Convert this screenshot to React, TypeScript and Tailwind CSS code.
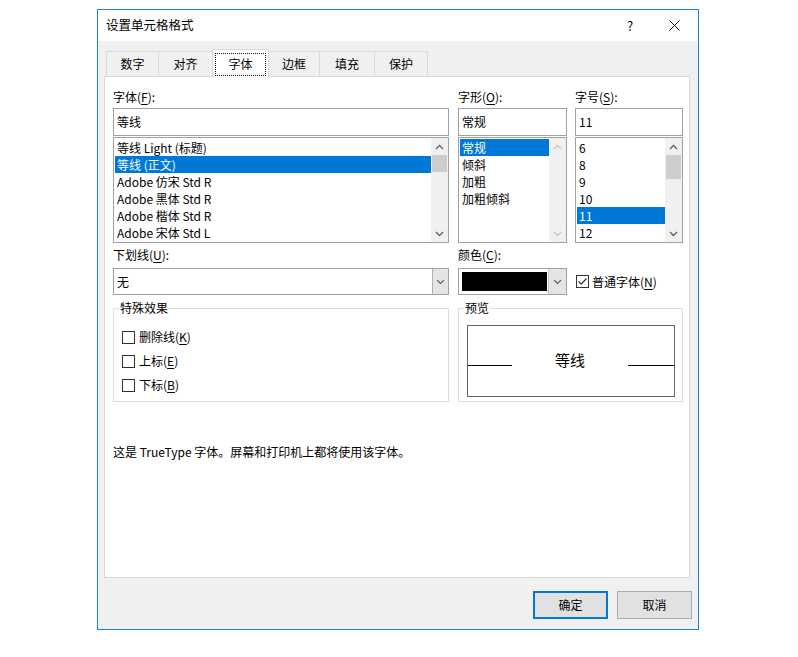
import React from "react";

function Chevron({ dir, color }: { dir: "up" | "down"; color: string }) {
  return (
    <svg width="9" height="6" viewBox="0 0 9 6">
      <path
        d={dir === "up" ? "M1 5 L4.5 1.5 L8 5" : "M1 1 L4.5 4.5 L8 1"}
        stroke={color}
        strokeWidth="1.3"
        fill="none"
      />
    </svg>
  );
}

function ScrollBar({ thumbClass, disabled }: { thumbClass?: string; disabled?: boolean }) {
  const c = disabled ? "#c8c8c8" : "#606060";
  return (
    <div className="w-[17px] h-full bg-[#f0f0f0] flex flex-col shrink-0">
      <div className="h-[17px] flex items-center justify-center">
        <Chevron dir="up" color={c} />
      </div>
      <div className="flex-1 flex flex-col items-center">
        {thumbClass && <div className={"w-[15px] bg-[#cdcdcd] " + thumbClass} />}
      </div>
      <div className="h-[17px] flex items-center justify-center">
        <Chevron dir="down" color={c} />
      </div>
    </div>
  );
}

function ListBox({
  items,
  selected,
  width,
  thumbClass,
  disabled,
}: {
  items: string[];
  selected: number;
  width: string;
  thumbClass?: string;
  disabled?: boolean;
}) {
  return (
    <div className={"h-[106px] border border-[#a0a0a0] bg-white flex mt-[1px] " + width}>
      <div className="flex-1 py-[1px] pl-[1px] overflow-hidden">
        {items.map((it, i) => (
          <div
            key={i}
            className={
              "h-[17px] leading-[17px] pl-[2px] whitespace-nowrap " +
              (i === selected ? "bg-[#0078d7] text-white" : "")
            }
          >
            {it}
          </div>
        ))}
      </div>
      <ScrollBar thumbClass={thumbClass} disabled={disabled} />
    </div>
  );
}

function CheckBox({ checked }: { checked?: boolean }) {
  return (
    <div className="w-[13px] h-[13px] border border-[#333333] bg-white flex items-center justify-center shrink-0">
      {checked && (
        <svg width="11" height="11" viewBox="0 0 11 11">
          <path d="M1.5 5.5 L4.2 8.2 L9.5 2.5" stroke="#333333" strokeWidth="1.2" fill="none" />
        </svg>
      )}
    </div>
  );
}

function DropArrow() {
  return (
    <svg width="9" height="6" viewBox="0 0 9 6">
      <path d="M1 1 L4.5 4.5 L8 1" stroke="#606060" strokeWidth="1.1" fill="none" />
    </svg>
  );
}

export default function App() {
  const tabs = [
    { t: "数字", w: "w-[53px]" },
    { t: "对齐", w: "w-[55px]" },
    { t: "字体", w: "w-[57px]", sel: true },
    { t: "边框", w: "w-[52px]" },
    { t: "填充", w: "w-[56px]" },
    { t: "保护", w: "w-[54px]" },
  ];
  return (
    <div className="w-[798px] h-[657px] bg-white pt-[9px] pl-[97px] font-['Noto_Sans_CJK_SC',sans-serif] text-[12px] leading-[16px] text-black">
      <div className="w-[602px] h-[621px] border border-[#1883d7] bg-[#f0f0f0] flex flex-col">
        {/* Title bar */}
        <div className="h-[31px] bg-white flex items-center pl-[8px] shrink-0">
          <span className="text-[12.5px] -mt-[1px]">设置单元格格式</span>
          <span className="ml-auto w-[20px] text-center text-[13px] mr-[29px]">?</span>
          <svg width="11" height="11" viewBox="0 0 11 11" className="mr-[18px]">
            <path d="M0.5 0.5 L10.5 10.5 M10.5 0.5 L0.5 10.5" stroke="#111" strokeWidth="1" />
          </svg>
        </div>

        {/* Tabs */}
        <div className="h-[35px] flex items-end pl-[8px] shrink-0 relative z-10">
          {tabs.map((tb, i) =>
            tb.sel ? (
              <div
                key={i}
                className={
                  "h-[28px] -mb-px -ml-px bg-white border border-b-0 border-[#d9d9d9] flex items-center justify-center px-[2px] " +
                  tb.w
                }
              >
                <div className="w-full h-[23px] mt-[1px] border border-dotted border-[#111] flex items-center justify-center">
                  字体
                </div>
              </div>
            ) : (
              <div
                key={i}
                className={
                  "h-[25px] bg-[#f0f0f0] border border-b-0 border-[#d9d9d9] flex items-center justify-center " +
                  (i > 0 ? "-ml-px " : "") +
                  tb.w
                }
              >
                {tb.t}
              </div>
            )
          )}
        </div>

        {/* Panel */}
        <div className="ml-[6px] mr-[8px] h-[502px] bg-white border border-[#d9d9d9] pt-[12px] pl-[8px] shrink-0">
          {/* Top row: three columns */}
          <div className="flex">
            <div className="w-[336px]">
              <div className="h-[16px]">
                字体(<span className="underline underline-offset-2">F</span>):
              </div>
              <div className="mt-[3px] h-[28px] border border-[#a0a0a0] bg-white flex items-center pl-[3px]">
                等线
              </div>
              <ListBox
                width="w-[336px]"
                selected={1}
                thumbClass="h-[17px]"
                items={[
                  "等线 Light (标题)",
                  "等线 (正文)",
                  "Adobe 仿宋 Std R",
                  "Adobe 黑体 Std R",
                  "Adobe 楷体 Std R",
                  "Adobe 宋体 Std L",
                ]}
              />
            </div>
            <div className="w-[109px] ml-[9px]">
              <div className="h-[16px]">
                字形(<span className="underline underline-offset-2">O</span>):
              </div>
              <div className="mt-[3px] h-[28px] border border-[#a0a0a0] bg-white flex items-center pl-[3px]">
                常规
              </div>
              <ListBox
                width="w-[109px]"
                selected={0}
                disabled
                items={["常规", "倾斜", "加粗", "加粗倾斜"]}
              />
            </div>
            <div className="w-[108px] ml-[8px]">
              <div className="h-[16px]">
                字号(<span className="underline underline-offset-2">S</span>):
              </div>
              <div className="mt-[3px] h-[28px] border border-[#a0a0a0] bg-white flex items-center pl-[3px]">
                11
              </div>
              <ListBox
                width="w-[108px]"
                selected={4}
                thumbClass="h-[24px]"
                items={["6", "8", "9", "10", "11", "12"]}
              />
            </div>
          </div>

          {/* Second row */}
          <div className="flex mt-[4px]">
            <div className="w-[336px]">
              <div className="h-[16px]">
                下划线(<span className="underline underline-offset-2">U</span>):
              </div>
              <div className="mt-[5px] h-[27px] border border-[#a0a0a0] bg-white flex">
                <div className="flex-1 flex items-center pl-[3px]">无</div>
                <div className="w-[16px] bg-[#e5e5e5] border-l border-[#b0b0b0] flex items-center justify-center">
                  <DropArrow />
                </div>
              </div>
            </div>
            <div className="w-[109px] ml-[9px]">
              <div className="h-[16px]">
                颜色(<span className="underline underline-offset-2">C</span>):
              </div>
              <div className="mt-[5px] h-[27px] border border-[#a0a0a0] bg-white flex">
                <div className="flex-1 pl-[3px] pr-[1px] py-[3px]">
                  <div className="w-full h-full bg-black" />
                </div>
                <div className="w-[18px] bg-[#e5e5e5] border-l border-[#c8c8c8] flex items-center justify-center">
                  <DropArrow />
                </div>
              </div>
            </div>
            <div className="w-[108px] ml-[8px] flex items-end">
              <div className="h-[27px] flex items-center ml-[1px] gap-[3px]">
                <CheckBox checked />
                <span>
                  普通字体(<span className="underline underline-offset-2">N</span>)
                </span>
              </div>
            </div>
          </div>

          {/* Group boxes */}
          <div className="flex mt-[5px]">
            <fieldset className="w-[336px] h-[102px] border border-[#dcdcdc]">
              <legend className="ml-[5px] px-[1px] leading-[16px]">特殊效果</legend>
              <div className="mt-[9px] pl-[8px]">
                {[
                  ["删除线", "K"],
                  ["上标", "E"],
                  ["下标", "B"],
                ].map(([t, k], i) => (
                  <div key={i} className="h-[24px] flex items-center gap-[4px]">
                    <CheckBox />
                    <span>
                      {t}(<span className="underline underline-offset-2">{k}</span>)
                    </span>
                  </div>
                ))}
              </div>
            </fieldset>
            <fieldset className="w-[225px] ml-[9px] h-[102px] border border-[#dcdcdc]">
              <legend className="ml-[5px] px-[1px] leading-[16px]">预览</legend>
              <div className="mt-[9px] ml-[8px] mr-[7px] h-[72px] border border-[#646464] bg-white flex items-start">
                <div className="w-[44px] h-px bg-black mt-[39px]" />
                <div className="flex-1 text-center text-[15px] leading-[20px] mt-[24px]">等线</div>
                <div className="w-[46px] h-px bg-black mt-[39px]" />
              </div>
            </fieldset>
          </div>

          <div className="mt-[42px] h-[16px]">这是 TrueType 字体。屏幕和打印机上都将使用该字体。</div>
        </div>

        {/* Buttons */}
        <div className="flex justify-end mt-[13px] mr-[6px] gap-[9px]">
          <div className="w-[75px] h-[28px] border-2 border-[#0078d7] bg-[#e1e1e1] flex items-center justify-center">
            确定
          </div>
          <div className="w-[75px] h-[28px] border border-[#adadad] bg-[#e1e1e1] flex items-center justify-center">
            取消
          </div>
        </div>
      </div>
    </div>
  );
}
